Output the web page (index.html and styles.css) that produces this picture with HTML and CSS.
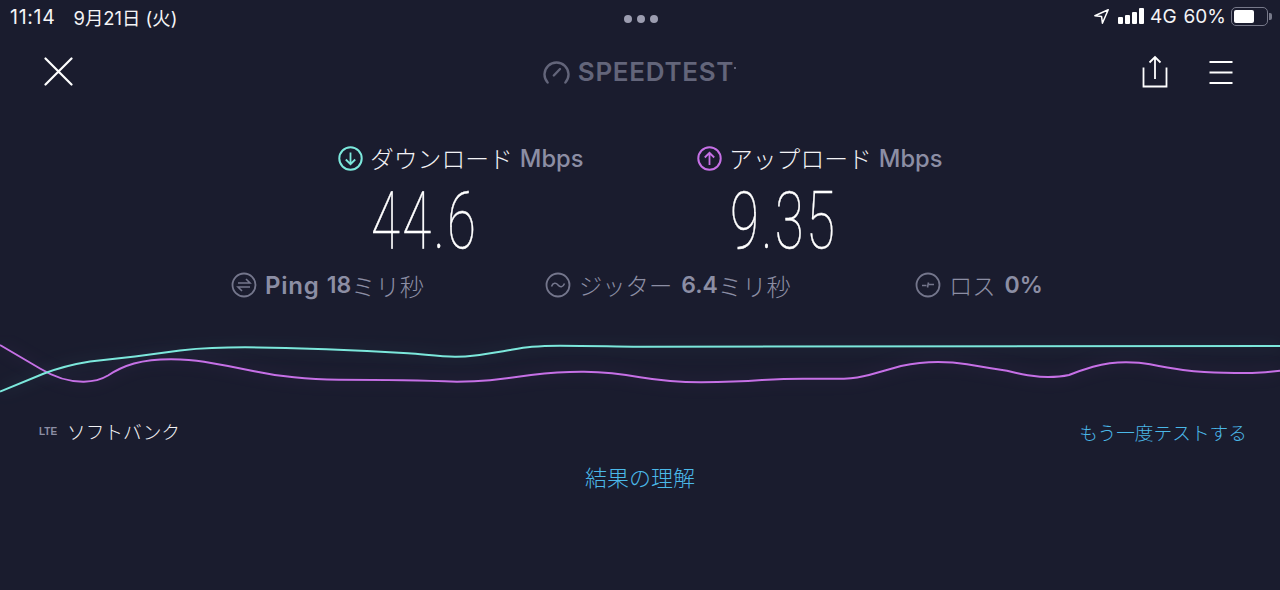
FILE: index.html
```html
<!DOCTYPE html>
<html lang="ja">
<head>
<meta charset="utf-8">
<title>Speedtest</title>
<link rel="stylesheet" href="styles.css">
</head>
<body>
<div class="page">
  <div class="status">
    <div class="status-left"><span class="time">11:14</span><span>9月21日 (火)</span></div>
    <div class="dots"><i></i><i></i><i></i></div>
    <div class="status-right">
      <svg class="loc" width="15" height="15" viewBox="0 0 15 15"><path d="M14.2 .8 .9 6.7 7.6 7.5 8.4 14.2Z" fill="none" stroke="#fff" stroke-width="1.5" stroke-linejoin="round"/></svg>
      <div class="bars"><i class="b1"></i><i class="b2"></i><i class="b3"></i><i class="b4"></i></div>
      <span class="net">4G</span>
      <span class="pct">60%</span>
      <div class="battery"><div class="cell"><div class="fill"></div></div><div class="cap"></div></div>
    </div>
  </div>

  <div class="header">
    <svg class="close" width="29" height="29" viewBox="0 0 29 29"><path d="M1.500 1.500 27.500 27.500M27.500 1.500 1.500 27.500" stroke="#fff" stroke-width="2.2" stroke-linecap="round"/></svg>
    <div class="logo">
      <svg width="27" height="24" viewBox="0 0 27 24"><path d="M4.6 22.5A12 12 0 1 1 22.4 22.5" fill="none" stroke="#63657a" stroke-width="2.4" stroke-linecap="round"/><path d="M10.8 15.5 17 9" stroke="#63657a" stroke-width="2.4" stroke-linecap="round"/></svg>
      <span class="logo-text">SPEEDTEST</span><i class="tm"></i>
    </div>
    <div class="actions">
      <svg width="26" height="33" viewBox="0 0 26 33"><path d="M1.5 12.5V31.5H24.5V12.5" fill="none" stroke="#fff" stroke-width="1.8"/><path d="M13 2V24M7.5 7.5 13 2 18.500 7.500" fill="none" stroke="#fff" stroke-width="1.8"/></svg>
      <svg width="24" height="24" viewBox="0 0 24 24"><path d="M.5 2H23.500M.5 12.500H23.500M.5 23H23.500" stroke="#fff" stroke-width="2"/></svg>
    </div>
  </div>

  <div class="results">
    <div class="result">
      <div class="result-head">
        <svg width="25" height="25" viewBox="0 0 25 25"><circle cx="12.500" cy="12.500" r="11.200" fill="none" stroke="#7ce8dc" stroke-width="2"/><path d="M12.500 6.500V18M7.800 13.500 12.500 18.200 17.200 13.500" fill="none" stroke="#7ce8dc" stroke-width="1.800"/></svg>
        <span class="jp">ダウンロード</span><span class="unit">Mbps</span>
      </div>
      <div class="value">44.6</div>
    </div>
    <div class="result">
      <div class="result-head">
        <svg width="25" height="25" viewBox="0 0 25 25"><circle cx="12.500" cy="12.500" r="11.200" fill="none" stroke="#c670e6" stroke-width="2"/><path d="M12.500 19V7M7.800 11.500 12.500 6.800 17.200 11.500" fill="none" stroke="#c670e6" stroke-width="1.800"/></svg>
        <span class="jp">アップロード</span><span class="unit">Mbps</span>
      </div>
      <div class="value">9.35</div>
    </div>
  </div>

  <div class="stats">
    <div class="stat">
      <svg width="26" height="26" viewBox="0 0 26 26"><circle cx="13" cy="13" r="11.500" fill="none" stroke="#74768c" stroke-width="1.800"/><path d="M7 11H19L15 7M19 15H7L11 19" fill="none" stroke="#74768c" stroke-width="1.600"/></svg>
      <span class="stat-strong wide">Ping</span><span class="stat-strong num">18</span><span class="jp-grey">ミリ秒</span>
    </div>
    <div class="stat">
      <svg width="26" height="26" viewBox="0 0 26 26"><circle cx="13" cy="13" r="11.500" fill="none" stroke="#74768c" stroke-width="1.800"/><path d="M6.500 14.500C8 10.500 11 10.500 13 13 15 15.500 18 15.500 19.500 11.500" fill="none" stroke="#74768c" stroke-width="1.600"/></svg>
      <span class="jp-grey tight">ジッター</span><span class="stat-strong gap">6.4</span><span class="jp-grey">ミリ秒</span>
    </div>
    <div class="stat">
      <svg width="26" height="26" viewBox="0 0 26 26"><circle cx="13" cy="13" r="11.500" fill="none" stroke="#74768c" stroke-width="1.800"/><path d="M7 13.500H11.500M14 12.500H19M13.500 10.500 12.500 15.500" fill="none" stroke="#74768c" stroke-width="1.600"/></svg>
      <span class="jp-grey tight">ロス</span><span class="stat-strong gap">0%</span>
    </div>
  </div>

  <svg class="graph" width="1280" height="70" viewBox="0 335 1280 70">
    <path class="line-up" d="M0 345L40 368.500Q62 382 84 381.700Q98 381.500 108 375.500Q120 367.500 134 363.500Q150 359.300 171 359.300Q190 359.500 204 361.700Q230 366 253 371Q274 375.500 294 377.300Q315 379.500 339 379.700Q408 379.700 457 381.700Q475 381.700 490 380.300Q510 378 531 375Q560 371.500 584 371.700Q612 372 640 377.300Q670 382.300 701 382.300Q735 382 762 380Q785 378.700 803 378.700L844 378.700Q858 378 869 375Q885 370.500 901 366Q920 362 938 362Q953 362 967 364.300Q988 368 1007 370.700Q1025 375 1032 375.700Q1040 377 1048 377Q1060 377 1069 375Q1080 370.500 1093 366.700Q1110 362.300 1126 362.300Q1140 362.500 1150 364.300Q1168 368 1183 370Q1205 372.700 1224 372.700Q1240 373.200 1252 373Q1265 372.500 1280 370.700"/>
    <path class="line-down" d="M0 391.700L44 373.500Q65 365.500 90 361.500Q112 359 135 356.500Q157 353.500 180 350.500Q196 348.500 212 348Q228 347.300 245 347.300C300 348 370 351 408 353.300C425 354.500 440 356.700 455 356.800C470 356.900 480 355 510 350C525 347.500 535 345.700 560 345.700C590 345.800 610 346.400 640 346.700L1280 346"/>
  </svg>

  <div class="footer-row">
    <div class="carrier"><span class="lte">LTE</span><span class="carrier-name">ソフトバンク</span></div>
    <span class="again">もう一度テストする</span>
  </div>
  <div class="learn">結果の理解</div>
</div>
</body>
</html>
```
FILE: styles.css
```css
* { box-sizing: border-box; }
html, body { margin: 0; padding: 0; }
body { background: #1a1c2e; }
.page {
  width: 1280px; height: 590px; overflow: hidden;
  background: #1a1c2e; color: #fff;
  font-family: Inter, "Noto Sans CJK JP", sans-serif;
}
.status {
  height: 30px; padding: 2px 8px 0 10px;
  display: grid; grid-template-columns: 1fr auto 1fr; align-items: center;
  font-size: 19px;
}
.status-left { display: flex; align-items: center; gap: 18px; color: #f4f4f6; font-size: 18.400px; padding-top: 2px; }
.time { font-size: 19.500px; letter-spacing: .7px; }
.dots { display: flex; gap: 5px; margin-top: 6px; }
.dots i { width: 8px; height: 8px; border-radius: 50%; background: #9c9db0; }
.status-right { display: flex; align-items: center; justify-content: flex-end; color: #f4f4f6; }
.loc { margin-right: 9px; }
.bars { display: flex; align-items: flex-end; gap: 2px; height: 16px; margin-right: 6px; }
.bars i { width: 5px; background: #fff; border-radius: 1px; }
.b1 { height: 7px; } .b2 { height: 9px; } .b3 { height: 12px; } .b4 { height: 16px; }
.net { margin-right: 7px; }
.pct { margin-right: 5px; }
.battery { display: flex; align-items: center; gap: 1px; }
.cell { width: 37px; height: 19px; border: 1.5px solid #77798a; border-radius: 5px; padding: 2px; }
.fill { width: 20px; height: 100%; background: #fff; border-radius: 2px; }
.cap { width: 3px; height: 7px; background: #77798a; border-radius: 0 2px 2px 0; }

.header {
  margin-top: 25px; height: 33px; padding: 0 47px 0 44px;
  display: grid; grid-template-columns: 1fr auto 1fr; align-items: center;
}
.logo { display: flex; align-items: center; gap: 8px; margin-left: 2px; }
.logo-text { font-size: 26px; font-weight: 600; color: #63657a; line-height: 1; letter-spacing: .7px; }
.tm { width: 2px; height: 2px; background: #63657a; align-self: flex-start; margin: 8px 0 0 -8px; }
.actions { display: flex; justify-content: flex-end; align-items: center; gap: 41px; }

.results {
  margin-top: 58px; padding-left: 338px;
  display: grid; grid-template-columns: 359px auto;
}
.result-head { display: flex; align-items: center; height: 25px; }
.jp { font-size: 23.800px; font-weight: 300; margin-left: 7px; padding-bottom: 3px; color: #f2f2f5; }
.unit { font-size: 23.700px; font-weight: 500; color: #8c8ea4; margin-left: 7px; }
.value {
  margin: 20px 0 0 33px; height: 60px; line-height: 60px;
  font-family: Roboto, sans-serif; font-weight: 100; font-size: 80px; letter-spacing: 3.500px;
  -webkit-text-stroke: .4px #fff;
  transform: scaleX(.66); transform-origin: left center;
}

.stats {
  margin-top: 21px; padding-left: 231px;
  display: grid; grid-template-columns: 314px 370px auto;
}
.stat { display: flex; align-items: center; height: 26px; color: #8c8ea4; }
.stat svg { margin-right: 8px; }
.stat-strong { font-size: 23px; font-weight: 600; }
.wide { font-size: 24px; letter-spacing: .8px; }
.num { margin-left: 7px; }
.gap { margin-left: 9px; }
.jp-grey { font-size: 24.300px; font-weight: 300; }
.tight { font-size: 23.300px; }

.graph { display: block; margin-top: 37px; }
.line-up, .line-down { fill: none; stroke-width: 2; }
.line-up { stroke: #c670e6; filter: drop-shadow(0 0 8px rgba(198,112,230,.2)); }
.line-down { stroke: #7ce8dc; filter: drop-shadow(0 0 8px rgba(124,232,220,.2)); }

.footer-row {
  margin-top: 14px; height: 24px; padding: 0 33px 0 39px;
  display: flex; justify-content: space-between; align-items: center;
  font-size: 18.700px; font-weight: 300;
}
.carrier { display: flex; align-items: center; gap: 11px; color: #f2f2f5; }
.carrier-name { padding-bottom: 2px; }
.lte { font-family: "Liberation Sans", sans-serif; font-size: 10px; font-weight: 700; color: #8c8ea4; width: 17px; }
.again { color: #4bb8e8; }
.learn { margin-top: 22px; text-align: center; font-size: 22px; font-weight: 300; color: #4bb8e8; line-height: 1.200; }
```
